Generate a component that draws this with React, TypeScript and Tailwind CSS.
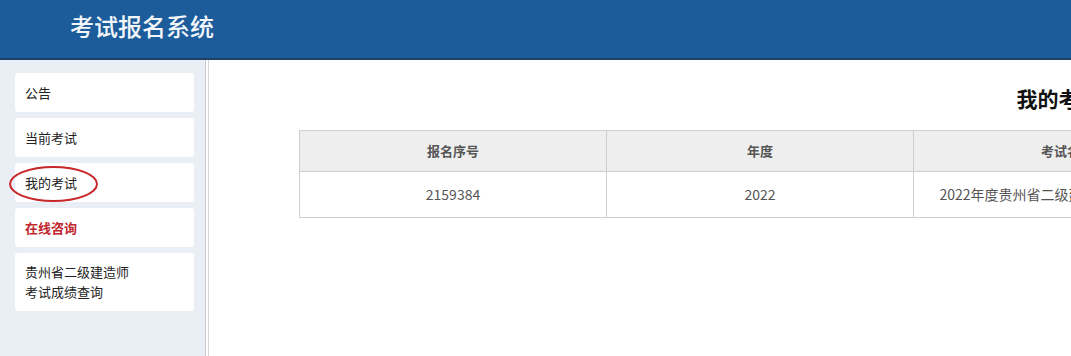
import React from "react";

const MENU = [
  { label: "公告" },
  { label: "当前考试" },
  { label: "我的考试", circled: true },
  { label: "在线咨询", red: true },
  { label: "贵州省二级建造师\n考试成绩查询" },
];

const COLS = ["报名序号", "年度", "考试名称", "报名状态", "操作"];
const ROW = ["2159384", "2022", "2022年度贵州省二级建造师执业资格考试", "已审核", "查看"];

export default function App() {
  return (
    <div
      className="h-screen w-full overflow-hidden bg-white flex flex-col"
      style={{ fontFamily: '"Noto Sans CJK SC", "Liberation Sans", sans-serif' }}
    >
      {/* Header */}
      <header className="h-[60px] shrink-0 bg-[#1c5c9a] border-b-2 border-[#1e3f66] flex items-center pl-[70px] pb-[6px]">
        <h1 className="text-[24px] font-medium text-[#f2f6fa] leading-none">
          考试报名系统
        </h1>
      </header>

      <div className="flex flex-1 min-w-[1912px]">
        {/* Sidebar */}
        <aside className="w-[206px] shrink-0 bg-[#eaeef5] border-r border-[#c9cdd3] pt-[13px] pl-[15px] pr-[11px] flex flex-col gap-[6px]">
          {MENU.map((m) => (
            <div
              key={m.label}
              className={`relative rounded-[3px] bg-white px-[10px] text-[13px] leading-[20px] whitespace-pre-line ${
                m.label.includes("\n") ? "py-[9px]" : "h-[39px] flex items-center"
              } ${m.red ? "text-[#c0272d] font-bold" : "text-[#222]"}`}
            >
              {m.label}
              {m.circled && (
                <span className="absolute left-[-6px] top-[3px] w-[89px] h-[36px] rounded-[50%] border-2 border-[#c8282a]" />
              )}
            </div>
          ))}
        </aside>

        {/* Main */}
        <main className="w-[1700px] shrink-0 ml-[2px] border-l border-[#d3d6db]">
          <h2 className="mt-[23px] text-center text-[21px] font-bold text-[#111] leading-[30px]">
            我的考试
          </h2>
          <table className="mt-[17px] ml-[90px] border-collapse text-[13px]">
            <thead>
              <tr className="bg-[#eeeeee]">
                {COLS.map((c) => (
                  <th
                    key={c}
                    className="w-[307px] h-[41px] border border-[#cfcfcf] font-bold text-[#555] text-center"
                  >
                    {c}
                  </th>
                ))}
              </tr>
            </thead>
            <tbody>
              <tr>
                {ROW.map((c) => (
                  <td
                    key={c}
                    className="h-[46px] border border-[#cfcfcf] text-[#555] text-center text-[14px]"
                  >
                    {c}
                  </td>
                ))}
              </tr>
            </tbody>
          </table>
        </main>
      </div>
    </div>
  );
}
